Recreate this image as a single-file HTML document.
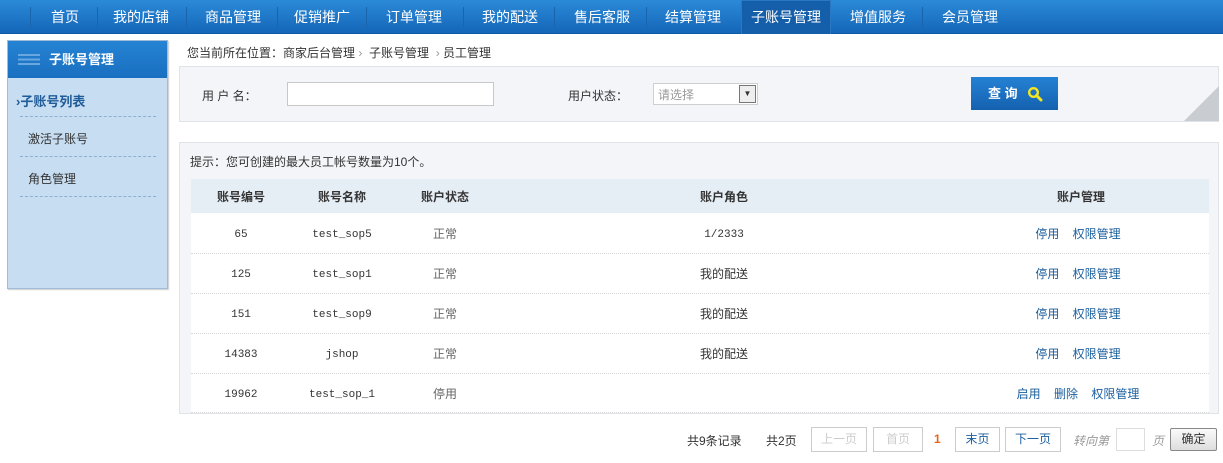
<!DOCTYPE html>
<html><head><meta charset="utf-8"><style>
*{margin:0;padding:0;box-sizing:border-box}
body{width:1223px;height:463px;background:#fff;font-family:"Liberation Sans","Noto Sans CJK SC",sans-serif;font-size:12px;color:#333;position:relative;overflow:hidden}
.a{position:absolute;white-space:nowrap}
.nav{left:0;top:0;width:1223px;height:34px;background:linear-gradient(#2b8ad8,#1566b8);border-bottom:1px solid #0f5aa5}
.ni{top:0;height:34px;line-height:34px;font-size:14px;color:#fff;text-align:center;transform:translateX(-50%)}
.sep{top:7px;width:1px;height:20px;background:#4d9ddf;border-left:1px solid #1a63ad}
.side{left:7px;top:40px;width:161px;height:249px;background:#c7ddf1;border:1px solid #9fbdd8;box-shadow:1px 1px 1px #ccc}
.sh{left:0;top:0;width:159px;height:37px;background:linear-gradient(#2583d3,#1a6fc0);color:#fff;font-weight:bold;font-size:13px;line-height:37px;padding-left:41px}
.dash{left:12px;width:136px;border-top:1px dashed #8fb0cc}
.td{transform:translateX(-50%);font-size:12px}
.mono{font-family:"Liberation Mono",monospace;font-size:11px}
.rl{left:191px;width:1018px;border-top:1px dotted #d8d8d8}
.lk{color:#1a5e9e}
.pb{top:427px;height:25px;border:1px solid #ccc;line-height:23px;text-align:center;font-size:12px}
</style></head><body>
<div class="a nav"></div>
<div class="a" style="left:741px;top:0;width:90px;height:34px;background:#155ea9;border:1px solid #2a78c4;border-bottom:none"></div>
<div class="a sep" style="left:30px"></div><div class="a sep" style="left:97px"></div><div class="a sep" style="left:186px"></div><div class="a sep" style="left:277px"></div><div class="a sep" style="left:366px"></div><div class="a sep" style="left:463px"></div><div class="a sep" style="left:554px"></div><div class="a sep" style="left:646px"></div><div class="a sep" style="left:922px"></div>
<div class="a ni" style="left:65px">首页</div>
<div class="a ni" style="left:141px">我的店铺</div>
<div class="a ni" style="left:233px">商品管理</div>
<div class="a ni" style="left:322px">促销推广</div>
<div class="a ni" style="left:414px">订单管理</div>
<div class="a ni" style="left:510px">我的配送</div>
<div class="a ni" style="left:602px">售后客服</div>
<div class="a ni" style="left:693px">结算管理</div>
<div class="a ni" style="left:786px">子账号管理</div>
<div class="a ni" style="left:878px">增值服务</div>
<div class="a ni" style="left:970px">会员管理</div>

<div class="a side">
 <div class="a sh">子账号管理</div>
 <div class="a" style="left:10px;top:13px;width:22px;height:11px;background:repeating-linear-gradient(#6aa7df 0 2px,transparent 2px 4.5px)"></div>
 <div class="a" style="left:8px;top:50px;color:#1f5c99;font-weight:bold;font-size:13px">›子账号列表</div>
 <div class="a dash" style="top:75px"></div>
 <div class="a" style="left:20px;top:89px">激活子账号</div>
 <div class="a dash" style="top:115px"></div>
 <div class="a" style="left:20px;top:129px">角色管理</div>
 <div class="a dash" style="top:155px"></div>
</div>

<div class="a" style="left:187px;top:44px">您当前所在位置：商家后台管理 <span style="color:#999">›</span>&nbsp; 子账号管理 &nbsp;<span style="color:#999">›</span> 员工管理</div>

<div class="a" style="left:179px;top:66px;width:1040px;height:56px;background:#f3f5f8;border:1px solid #e0e3e8"></div>
<div class="a" style="left:202px;top:87px">用 户 名：</div>
<div class="a" style="left:287px;top:82px;width:207px;height:24px;background:#fff;border:1px solid #c8c8c8"></div>
<div class="a" style="left:568px;top:87px">用户状态：</div>
<div class="a" style="left:653px;top:83px;width:105px;height:22px;background:#fff;border:1px solid #cfcfcf;color:#999;padding:2px 4px">请选择</div>
<div class="a" style="left:739px;top:85px;width:17px;height:18px;border:1px solid #777;background:#eee;font-size:8px;text-align:center;line-height:16px">▼</div>
<div class="a" style="left:971px;top:77px;width:87px;height:33px;background:linear-gradient(#2582d4,#1561b0);color:#fff;font-weight:bold;font-size:13px;line-height:33px;padding-left:17px">查 询</div>
<svg class="a" style="left:1027px;top:86px" width="18" height="16" viewBox="0 0 18 16"><circle cx="6.5" cy="6.5" r="4.3" fill="none" stroke="#f5e61f" stroke-width="2.4"/><path d="M9.5 9.5 L14 14" stroke="#f5e61f" stroke-width="3" stroke-linecap="round"/></svg>
<div class="a" style="left:1184px;top:86px;width:0;height:0;border-left:35px solid transparent;border-bottom:35px solid #c9ccd0"></div>

<div class="a" style="left:179px;top:142px;width:1040px;height:272px;background:#f3f5f8;border:1px solid #e0e3e8"></div>
<div class="a" style="left:190px;top:153px">提示：您可创建的最大员工帐号数量为10个。</div>
<div class="a" style="left:191px;top:179px;width:1018px;height:234px;background:#fff"></div>
<div class="a" style="left:191px;top:179px;width:1018px;height:34px;background:#e6eef5"></div>
<div class="a td" style="left:241px;top:188px;font-weight:bold">账号编号</div>
<div class="a td" style="left:342px;top:188px;font-weight:bold">账号名称</div>
<div class="a td" style="left:445px;top:188px;font-weight:bold">账户状态</div>
<div class="a td" style="left:724px;top:188px;font-weight:bold">账户角色</div>
<div class="a td" style="left:1081px;top:188px;font-weight:bold">账户管理</div>

<div class="a rl" style="top:253px"></div><div class="a rl" style="top:293px"></div><div class="a rl" style="top:333px"></div><div class="a rl" style="top:373px"></div><div class="a rl" style="top:412px"></div>

<div class="a td mono" style="left:241px;top:229px">65</div><div class="a td mono" style="left:342px;top:229px">test_sop5</div><div class="a td" style="left:445px;top:225px;color:#666">正常</div><div class="a td mono" style="left:724px;top:229px">1/2333</div><div class="a td lk" style="left:1078px;top:225px">停用 &nbsp;&nbsp; 权限管理</div>
<div class="a td mono" style="left:241px;top:269px">125</div><div class="a td mono" style="left:342px;top:269px">test_sop1</div><div class="a td" style="left:445px;top:265px;color:#666">正常</div><div class="a td" style="left:724px;top:265px">我的配送</div><div class="a td lk" style="left:1078px;top:265px">停用 &nbsp;&nbsp; 权限管理</div>
<div class="a td mono" style="left:241px;top:309px">151</div><div class="a td mono" style="left:342px;top:309px">test_sop9</div><div class="a td" style="left:445px;top:305px;color:#666">正常</div><div class="a td" style="left:724px;top:305px">我的配送</div><div class="a td lk" style="left:1078px;top:305px">停用 &nbsp;&nbsp; 权限管理</div>
<div class="a td mono" style="left:241px;top:349px">14383</div><div class="a td mono" style="left:342px;top:349px">jshop</div><div class="a td" style="left:445px;top:345px;color:#666">正常</div><div class="a td" style="left:724px;top:345px">我的配送</div><div class="a td lk" style="left:1078px;top:345px">停用 &nbsp;&nbsp; 权限管理</div>
<div class="a td mono" style="left:241px;top:389px">19962</div><div class="a td mono" style="left:342px;top:389px">test_sop_1</div><div class="a td" style="left:445px;top:385px;color:#666">停用</div><div class="a td lk" style="left:1078px;top:385px">启用 &nbsp;&nbsp; 删除 &nbsp;&nbsp; 权限管理</div>

<div class="a" style="left:687px;top:432px">共9条记录</div>
<div class="a" style="left:766px;top:432px">共2页</div>
<div class="a pb" style="left:811px;width:56px;color:#ccc">上一页</div>
<div class="a pb" style="left:873px;width:50px;color:#ccc">首页</div>
<div class="a" style="left:934px;top:432px;color:#e8661c;font-weight:bold">1</div>
<div class="a pb" style="left:955px;width:45px;color:#1a5e9e">末页</div>
<div class="a pb" style="left:1005px;width:56px;color:#1a5e9e">下一页</div>
<div class="a" style="left:1073px;top:432px;color:#999;font-style:italic">转向第</div>
<div class="a" style="left:1116px;top:428px;width:29px;height:23px;border:1px solid #ddd"></div>
<div class="a" style="left:1152px;top:432px;color:#999;font-style:italic">页</div>
<div class="a" style="left:1170px;top:428px;width:47px;height:23px;border:1px solid #888;border-radius:2px;background:linear-gradient(#fafafa,#ddd);text-align:center;line-height:21px">确定</div>
</body></html>
